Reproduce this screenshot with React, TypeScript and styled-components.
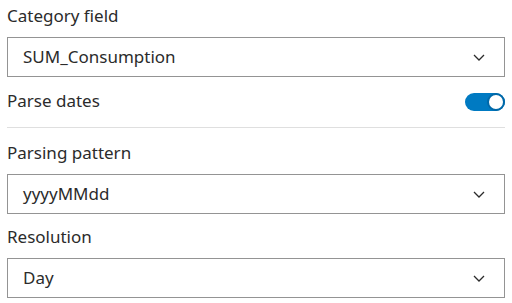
import React from "react";
import styled, { createGlobalStyle } from "styled-components";

const Global = createGlobalStyle`
  html, body { margin: 0; padding: 0; background: #ffffff; }
  body { font-family: "Noto Sans", "Open Sans", sans-serif; color: #323232; }
`;

const Panel = styled.div`
  display: flex;
  flex-direction: column;
  padding: 6px 7px 0 7px;
  width: 512px;
  box-sizing: border-box;
`;

const Field = styled.div<{ $mt?: number }>`
  display: flex;
  flex-direction: column;
  gap: 11px;
  margin-top: ${(p) => p.$mt ?? 0}px;
`;

const Label = styled.div`
  font-size: 17px;
  line-height: 20px;
  color: #2b2b2b;
`;

const SelectBox = styled.div`
  display: flex;
  align-items: center;
  justify-content: space-between;
  height: 40px;
  box-sizing: border-box;
  border: 1px solid #949494;
  padding: 0 17px 0 15px;
  font-size: 17px;
  line-height: 20px;
  color: #2b2b2b;
  background: #ffffff;
`;

const Row = styled.div`
  display: flex;
  align-items: center;
  justify-content: space-between;
  height: 20px;
  margin-top: 14px;
`;

const Divider = styled.div`
  height: 1px;
  background: #dfdfdf;
  margin-top: 16px;
`;

const Track = styled.div`
  width: 40px;
  height: 18px;
  border-radius: 9px;
  background: #007ac2;
  display: flex;
  align-items: center;
  justify-content: flex-end;
  box-sizing: border-box;
  margin-top: 1px;
`;

const Knob = styled.div`
  width: 18px;
  height: 18px;
  border-radius: 50%;
  background: #ffffff;
  box-sizing: border-box;
  border: 2px solid #0068a8;
`;

const Chevron = () => (
  <svg width="16" height="16" viewBox="0 0 16 16" aria-hidden>
    <polyline points="3,6 8,11 13,6" fill="none" stroke="#2b2b2b" strokeWidth="1.3" />
  </svg>
);

const Select = ({ value }: { value: string }) => (
  <SelectBox>
    <span>{value}</span>
    <Chevron />
  </SelectBox>
);

export default function App() {
  return (
    <>
      <Global />
      <Panel>
        <Field>
          <Label>Category field</Label>
          <Select value="SUM_Consumption" />
        </Field>
        <Row>
          <Label>Parse dates</Label>
          <Track>
            <Knob />
          </Track>
        </Row>
        <Divider />
        <Field $mt={15}>
          <Label>Parsing pattern</Label>
          <Select value="yyyyMMdd" />
        </Field>
        <Field $mt={13}>
          <Label>Resolution</Label>
          <Select value="Day" />
        </Field>
      </Panel>
    </>
  );
}
